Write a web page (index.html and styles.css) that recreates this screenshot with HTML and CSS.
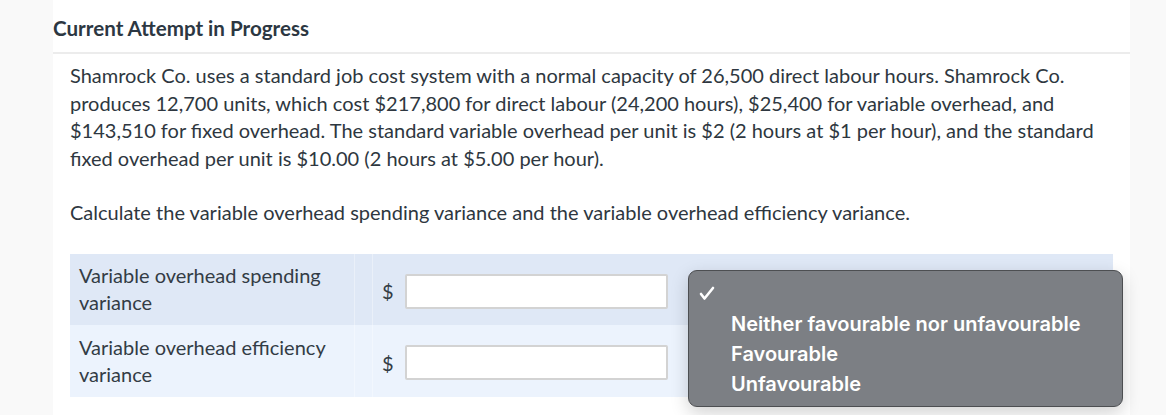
FILE: index.html
```html
<!DOCTYPE html>
<html lang="en">
<head>
<meta charset="utf-8">
<title>Current Attempt in Progress</title>
<link rel="stylesheet" href="styles.css">
</head>
<body>
<div class="panel">
  <div class="header">Current Attempt in Progress</div>
  <div class="content">
    <p class="question">Shamrock Co. uses a standard job cost system with a normal capacity of 26,500 direct labour hours. Shamrock Co. produces 12,700 units, which cost $217,800 for direct labour (24,200 hours), $25,400 for variable overhead, and $143,510 for fixed overhead. The standard variable overhead per unit is $2 (2 hours at $1 per hour), and the standard fixed overhead per unit is $10.00 (2 hours at $5.00 per hour).</p>
    <p class="question">Calculate the variable overhead spending variance and the variable overhead efficiency variance.</p>
    <div class="table-wrap">
      <div class="table">
        <div class="row row-a">
          <div class="cell label">Variable overhead spending variance</div>
          <div class="cell spacer"></div>
          <div class="cell amount"><span class="dollar">$</span><span class="input"></span></div>
          <div class="cell select"></div>
        </div>
        <div class="row row-b">
          <div class="cell label">Variable overhead efficiency variance</div>
          <div class="cell spacer"></div>
          <div class="cell amount"><span class="dollar">$</span><span class="input"></span></div>
          <div class="cell select"></div>
        </div>
      </div>
      <div class="menu">
        <div class="menu-item check-row">
          <svg class="check" width="16" height="15" viewBox="0 0 16 15"><polyline points="2,8 5.5,12.5 14,2" fill="none" stroke="#ffffff" stroke-width="2.6" stroke-linecap="round" stroke-linejoin="round"/></svg>
        </div>
        <div class="menu-item">Neither favourable nor unfavourable</div>
        <div class="menu-item">Favourable</div>
        <div class="menu-item">Unfavourable</div>
      </div>
    </div>
  </div>
</div>
</body>
</html>
```

FILE: styles.css
```css
html, body {
  margin: 0;
  padding: 0;
}
body {
  background: #f9f9f9;
  font-family: Lato, "Noto Sans", sans-serif;
  color: #2e3740;
  height: 415px;
  overflow: hidden;
}
.panel {
  margin-left: 53px;
  width: 1077px;
  background: #ffffff;
  min-height: 415px;
}
.header {
  height: 54px;
  box-sizing: border-box;
  padding-top: 16px;
  font-weight: 700;
  font-size: 20.6px;
  line-height: 24px;
  color: #2c3742;
  border-bottom: 2px solid #ececec;
}
.content {
  padding: 8px 17px 0 17px;
}
.question {
  margin: 0 0 27px 0;
  font-size: 20px;
  line-height: 27.5px;
  color: #2e3740;
}
.table-wrap {
  position: relative;
}
.table {
  display: flex;
  flex-direction: column;
}
.row {
  display: grid;
  grid-template-columns: 285px 18px 315px 1fr;
  height: 71.5px;
}
.row-a { background: #dfe8f6; }
.row-b { background: #ecf3fd; }
.cell {
  display: flex;
  align-items: center;
}
.label {
  padding-left: 9px;
  padding-right: 20px;
  font-size: 20px;
  line-height: 27px;
  color: #333c45;
  border-right: 1px solid rgba(255,255,255,0.35);
}
.spacer {
  border-right: 1px solid rgba(255,255,255,0.35);
}
.amount {
  padding-left: 9px;
  gap: 11px;
}
.dollar {
  font-size: 20px;
  color: #333c45;
  padding-top: 4px;
}
.input {
  display: block;
  width: 259px;
  height: 31px;
  background: #fff;
  border: 2px solid #d3d3d3;
  border-radius: 2px;
  margin-top: 4px;
}
.menu {
  position: absolute;
  left: 618px;
  top: 16px;
  width: 435px;
  height: 137px;
  box-sizing: border-box;
  background: #7c7f84;
  border: 1px solid #4d4f52;
  border-radius: 9px;
  box-shadow: 0 6px 18px rgba(0,0,0,0.18);
  padding-top: 5px;
  font-family: Inter, "Liberation Sans", sans-serif;
  font-weight: 600;
  font-size: 20px;
  color: #ffffff;
}
.menu-item {
  height: 30px;
  line-height: 30px;
  padding-left: 42px;
  position: relative;
}
.check-row {
  height: 33px;
  line-height: 33px;
}
.check {
  position: absolute;
  left: 10px;
  top: 10px;
  display: block;
}
```
